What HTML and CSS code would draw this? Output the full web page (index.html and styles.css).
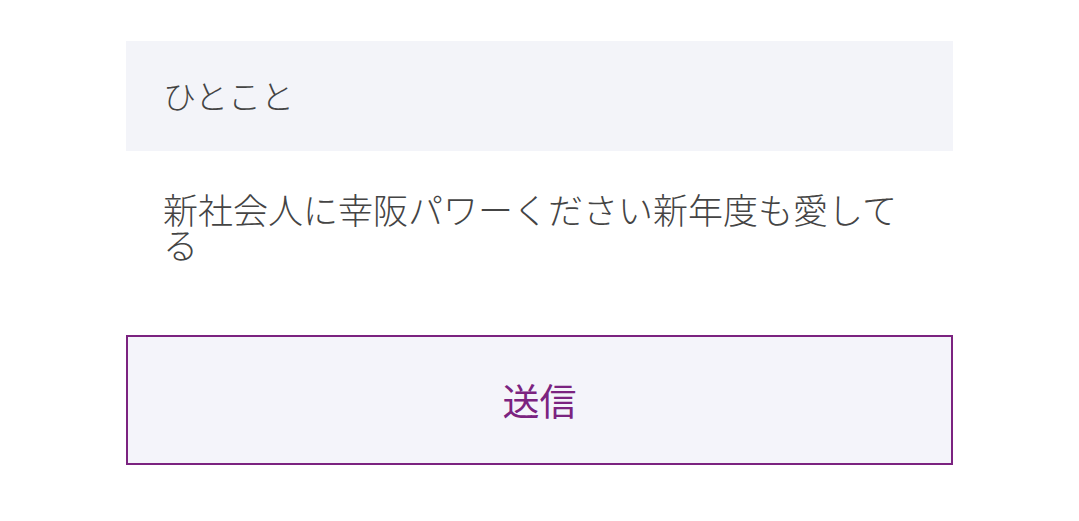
FILE: index.html
```html
<!DOCTYPE html>
<html lang="ja">
<head>
  <meta charset="UTF-8" />
  <meta name="viewport" content="width=device-width, initial-scale=1.0"/>
  <title>ひとこと</title>
  <link rel="stylesheet" href="styles.css">
</head>
<body>
  <div class="form">
    <div class="form-label">ひとこと</div>
    <div class="form-message">新社会人に幸阪パワーください新年度も愛してる</div>
    <button class="submit-btn" type="button">送信</button>
  </div>
</body>
</html>
```

FILE: styles.css
```css
body {
  margin: 0;
  background: #fff;
  font-family: "Noto Sans CJK JP", "Noto Sans", sans-serif;
  color: #444;
}

.form {
  width: 827px;
  margin: 41px auto 0;
}

.form-label {
  height: 110px;
  box-sizing: border-box;
  padding: 0 37px 2px;
  display: flex;
  align-items: center;
  background: #f3f4f9;
  font-size: 33px;
  font-weight: 300;
}

.form-message {
  box-sizing: border-box;
  height: 184px;
  padding: 40px 37px 0;
  font-size: 35px;
  font-weight: 300;
  line-height: 35px;
}

.submit-btn {
  display: block;
  width: 100%;
  height: 130px;
  background: #f4f4fa;
  border: 2px solid #7b2380;
  color: #7b2380;
  font-family: inherit;
  font-size: 37px;
  font-weight: 400;
  cursor: pointer;
}
```
